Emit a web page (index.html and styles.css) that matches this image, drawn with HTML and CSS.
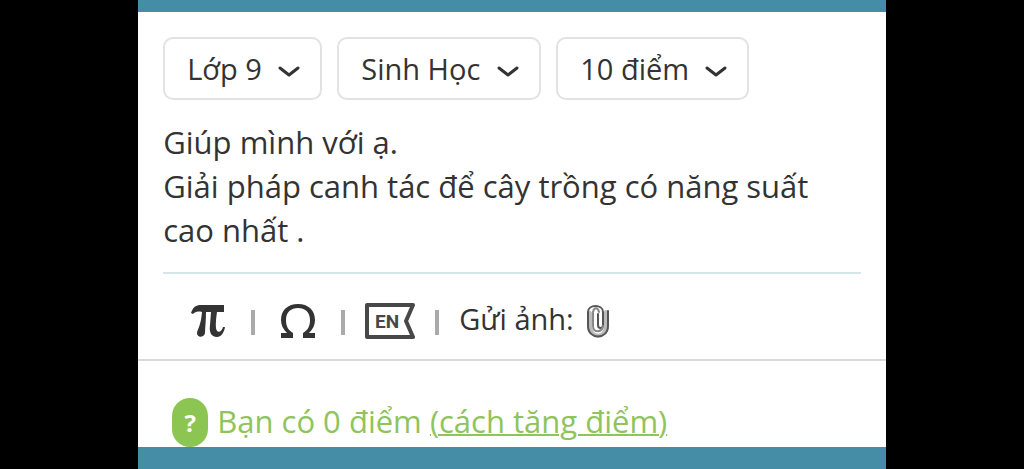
FILE: index.html
```html
<!DOCTYPE html>
<html lang="vi">
<head>
<meta charset="utf-8">
<meta name="viewport" content="width=device-width, initial-scale=1">
<title>Đặt câu hỏi</title>
<link rel="stylesheet" href="styles.css">
</head>
<body>
<main class="page">
  <form class="card">
    <div class="question">
      <div class="filters">
        <div class="picker">
          <select class="picker-select" aria-label="Lớp"><option>Lớp 9</option></select>
          <svg class="chevron" viewBox="0 0 22 12" aria-hidden="true"><path d="M2 2 L11 9 L20 2"/></svg>
        </div>
        <div class="picker">
          <select class="picker-select" aria-label="Môn học"><option>Sinh Học</option></select>
          <svg class="chevron" viewBox="0 0 22 12" aria-hidden="true"><path d="M2 2 L11 9 L20 2"/></svg>
        </div>
        <div class="picker">
          <select class="picker-select" aria-label="Điểm"><option>10 điểm</option></select>
          <svg class="chevron" viewBox="0 0 22 12" aria-hidden="true"><path d="M2 2 L11 9 L20 2"/></svg>
        </div>
      </div>
      <textarea class="question-text" rows="3" aria-label="Câu hỏi" spellcheck="false">Giúp mình với ạ.
Giải pháp canh tác để cây trồng có năng suất cao nhất .</textarea>
    </div>
    <div class="tools">
      <button class="tool symbol" type="button" aria-label="Công thức">
        <svg width="34" height="34" viewBox="0 0 34 34" aria-hidden="true">
          <path fill="#333" d="M0 9 C2 3 5 1 10 1 H33 V8 H26 C25 15 24 24 26 27 C28 29 31 27 32 23 H34 C33 29 30 33 26 33 C20 33 18 28 19 21 L20 8 H15 C15 17 14 24 14 29 C13 34 6 34 6 29 C6 26 10 22 11 8 C6 7 4 8 2 10 Z"/>
        </svg>
      </button>
      <span class="divider"></span>
      <button class="tool symbol" type="button" aria-label="Ký hiệu">
        <svg width="34" height="34" viewBox="0 0 34 34" aria-hidden="true">
          <path fill="#333" d="M0 29 H6 C2 25 0 21 0 16 C0 6 7 0 17 0 S34 6 34 16 C34 21 32 25 28 29 H34 V34 H22 V29 C27 26 29 22 29 16 C29 8 24 4 17 4 S5 8 5 16 C5 22 7 26 12 29 V34 H0 Z"/>
        </svg>
      </button>
      <span class="divider"></span>
      <button class="tool" type="button" aria-label="Tiếng Anh">
        <svg width="50" height="36" viewBox="0 0 50 36" aria-hidden="true">
          <path fill="none" stroke="#484848" stroke-width="4" stroke-linejoin="round" d="M2 2 H48 L41 18 L48 34 H2 Z"/>
          <text class="language" x="10" y="25">EN</text>
        </svg>
      </button>
      <span class="divider"></span>
      <label class="upload" for="photo">
        <span class="upload-text">Gửi ảnh:</span>
        <svg width="24" height="34" viewBox="0 0 24 34" aria-hidden="true">
          <path class="clip-edge" d="M4 9 V22 C4 35 20 35 20 22 V8"/>
          <path class="clip" d="M12 10 V21 C12 25 17 25 17 21 V8 C17 0 2 0 2 8 V22 C2 36 22 36 22 22 V7"/>
          <path class="clip-thin" d="M7 9 V22 C7 29 16 29 17 22 M7 8 C8 3 12 3 13 8"/>
        </svg>
      </label>
      <input class="file" id="photo" type="file">
    </div>
    <div class="points">
      <span class="badge">?</span>
      <span class="points-text">Bạn có 0 điểm <a class="more" href="#points">(cách tăng điểm)</a></span>
    </div>
  </form>
</main>
</body>
</html>
```
FILE: styles.css
```css
* {
  box-sizing: border-box;
}

body {
  margin: 0;
  background: #000;
  color: #333;
  font-family: "Open Sans", "Noto Sans", sans-serif;
  font-size: 29px;
}

.page {
  width: 73%;
  min-height: 100vh;
  margin: 0 auto;
  padding-top: 12px;
  background: #458ca6;
}

.card {
  background: #fff;
}

.question {
  padding: 25px 25px 0;
}

.filters {
  display: flex;
  gap: 15px;
}

.picker {
  display: grid;
  align-items: center;
}

.picker-select,
.chevron {
  grid-area: 1 / 1;
}

.picker-select {
  appearance: none;
  height: 63px;
  padding: 0 58px 0 22px;
  border: 2px solid #e2e2e2;
  border-radius: 10px;
  background: #fff;
  color: inherit;
  font: inherit;
}

.chevron {
  justify-self: end;
  width: 22px;
  height: 12px;
  margin: 6px 22px 0 0;
  pointer-events: none;
  fill: none;
  stroke: #333;
  stroke-width: 3;
  stroke-linecap: round;
  stroke-linejoin: round;
}

.question-text {
  display: block;
  width: 100%;
  margin-top: 20px;
  padding: 0 0 20px;
  border: 0;
  border-bottom: 2px solid #d5e6e8;
  background: transparent;
  color: inherit;
  font: inherit;
  font-size: 31px;
  line-height: 44px;
  resize: none;
  overflow: hidden;
}

.tools {
  display: flex;
  align-items: center;
  gap: 20px;
  height: 87px;
  padding: 8px 47px 0;
  border-bottom: 2px solid #d9d9d9;
}

.tool {
  display: flex;
  padding: 0;
  border: 0;
  background: none;
}

.symbol {
  padding: 0 6px;
}

.divider {
  width: 4px;
  height: 25px;
  margin-top: 4px;
  background: #aaa;
}

.language {
  fill: #484848;
  font-family: Roboto, sans-serif;
  font-size: 19px;
  font-weight: 700;
}

.upload {
  display: flex;
  align-items: center;
  gap: 12px;
}

.upload-text {
  padding-bottom: 4px;
}

.clip,
.clip-edge,
.clip-thin {
  fill: none;
  stroke-linecap: round;
}

.clip-edge {
  stroke: #bbb;
  stroke-width: 4;
}

.clip {
  stroke: #555;
  stroke-width: 2;
}

.clip-thin {
  stroke: #888;
  stroke-width: 2;
}

.file {
  display: none;
}

.points {
  display: flex;
  align-items: center;
  gap: 9px;
  padding: 37px 34px 0;
  color: #8fc45c;
  font-size: 31px;
}

.points-text {
  padding-bottom: 4px;
}

.badge {
  display: grid;
  place-items: center;
  width: 36px;
  height: 49px;
  border-radius: 18px;
  background: #8cc552;
  color: #fff;
  font-size: 24px;
  font-weight: 700;
}

.more {
  color: inherit;
  text-decoration-thickness: 2px;
}
```
